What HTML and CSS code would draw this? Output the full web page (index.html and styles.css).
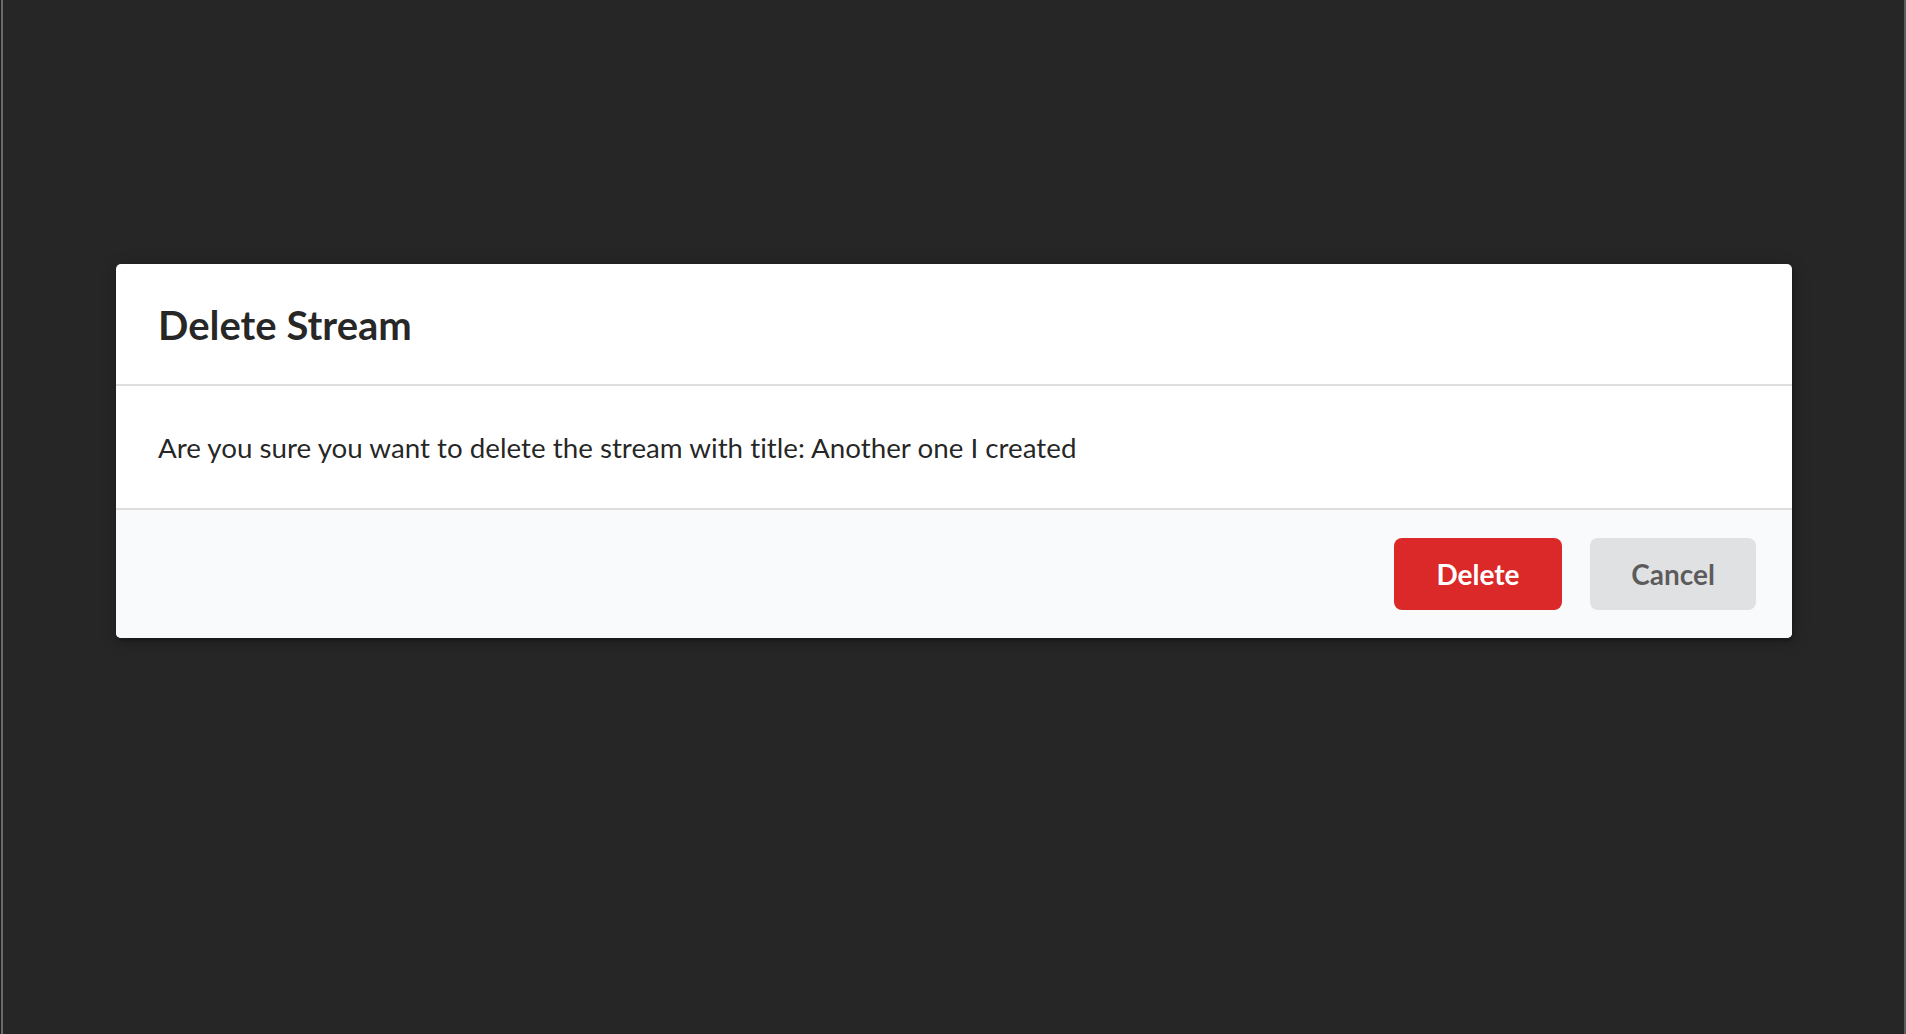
FILE: index.html
```html
<!DOCTYPE html>
<html lang="en">
<head>
<meta charset="utf-8">
<title>Delete Stream</title>
<link rel="stylesheet" href="styles.css">
</head>
<body>
<div class="dimmer">
  <div class="modal">
    <div class="modal-header">Delete Stream</div>
    <div class="modal-content">Are you sure you want to delete the stream with title: Another one I created</div>
    <div class="modal-actions">
      <button class="btn btn-red">Delete</button>
      <button class="btn btn-grey">Cancel</button>
    </div>
  </div>
</div>
</body>
</html>
```
FILE: styles.css
```css
html, body {
  margin: 0;
  padding: 0;
  height: 100%;
}
body {
  background: #262626;
  font-family: Lato, "Helvetica Neue", Arial, sans-serif;
  font-variant-ligatures: none;
}
.dimmer {
  box-sizing: border-box;
  height: 100%;
  padding: 264px 114px 0 116px;
  background: #262626;
  box-shadow: inset 1px 0 #1e1e1e, inset 3px 0 #6a6a6a, inset -2px 0 #5c5c5c;
}
.modal {
  background: #fff;
  border-radius: 5px;
  box-shadow: 1px 3px 3px 0 rgba(0,0,0,.2), 1px 3px 15px 2px rgba(0,0,0,.2);
  overflow: hidden;
}
.modal-header {
  padding: 35px 42px 33px 42px;
  font-size: 40px;
  line-height: 52px;
  font-weight: 700;
  color: rgba(0,0,0,.85);
  border-bottom: 2px solid #dededf;
}
.modal-content {
  padding: 42px 42px 40px 42px;
  font-size: 27.75px;
  line-height: 40px;
  color: rgba(0,0,0,.87);
  border-bottom: 2px solid #dededf;
}
.modal-actions {
  background: #f9fafb;
  padding: 28px 36px 28px 28px;
  display: flex;
  justify-content: flex-end;
  gap: 28px;
}
.btn {
  box-sizing: border-box;
  font-family: Lato, "Helvetica Neue", Arial, sans-serif;
  font-variant-ligatures: none;
  font-size: 28px;
  line-height: 28px;
  font-weight: 700;
  border: none;
  border-radius: 8px;
  padding: 22px 0;
  height: 72px;
  text-align: center;
  cursor: pointer;
}
.btn-red {
  background: #db2828;
  color: #fff;
  width: 168px;
}
.btn-grey {
  background: #e0e1e2;
  color: rgba(0,0,0,.6);
  width: 166px;
}
```
